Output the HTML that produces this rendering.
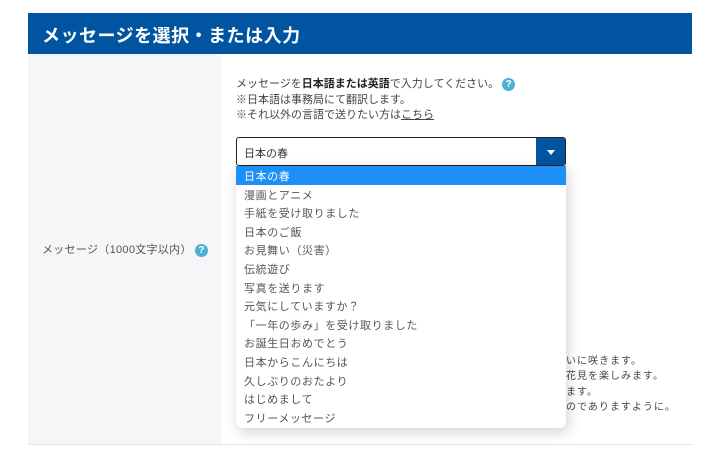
<!DOCTYPE html>
<html><head><meta charset="utf-8"><style>
*{margin:0;padding:0;box-sizing:border-box}
body{width:720px;height:458px;background:#fff;position:relative;overflow:hidden;font-family:"Liberation Sans","Noto Sans CJK JP",sans-serif;color:#444}
.hdr{position:absolute;left:28px;top:13px;width:664px;height:41px;background:#0054a0;color:#fff;font-size:18px;font-weight:bold;padding:9px 0 0 14px;letter-spacing:0.5px}
.left{position:absolute;left:28px;top:54px;width:194px;height:390px;background:#f6f5f7}
.line{position:absolute;left:28px;top:444px;width:664px;height:1px;background:#e4e4e4}
.lbl{position:absolute;left:42px;top:241px;font-size:11px;color:#555;letter-spacing:0.3px}
.q{display:inline-block;width:13px;height:13px;border-radius:50%;background:#4cb0d6;color:#fff;font-size:10px;font-weight:bold;text-align:center;line-height:13px;vertical-align:middle}
.info{position:absolute;left:236px;top:77px;font-size:11px;line-height:15.5px;color:#444}
.info b{color:#222}
.sel{position:absolute;left:236px;top:137px;width:330px;height:29px;border:1px solid #222;border-radius:3px;background:#fff;font-size:11px;padding:7px 0 0 7px;color:#333}
.btn{position:absolute;right:0;top:0;width:29px;height:27px;background:#0054a0;border-radius:0 2px 2px 0}
.btn:after{content:"";position:absolute;left:11px;top:12px;border-left:4px solid transparent;border-right:4px solid transparent;border-top:5px solid #fff}
.dd{position:absolute;left:236px;top:166px;width:330px;height:262px;background:#fff;border-radius:0 0 6px 6px;box-shadow:2px 4px 14px rgba(0,0,0,0.18);overflow:hidden;z-index:2}
.dd div{height:18.6px;font-size:11px;padding:2px 0 0 8px;color:#555;letter-spacing:0.6px}
.dd div.a{background:#1e8ef8;color:#fff}
.bg{position:absolute;left:236px;top:354px;font-size:10px;line-height:15.3px;color:#444;letter-spacing:1px;text-align:right;width:424px}
</style></head><body>
<div class="hdr">メッセージを選択・または入力</div>
<div class="left"></div>
<div class="line"></div>
<div class="lbl">メッセージ（1000文字以内） <span class="q">?</span></div>
<div class="info">メッセージを<b>日本語または英語</b>で入力してください。 <span class="q">?</span><br>※日本語は事務局にて翻訳します。<br>※それ以外の言語で送りたい方は<u>こちら</u></div>
<div class="sel">日本の春<div class="btn"></div></div>
<div class="bg" style="text-align:left;left:566px;width:140px">いに咲きます。<br>花見を楽しみます。<br>ます。<br>のでありますように。</div>
<div class="dd">
<div class="a">日本の春</div><div>漫画とアニメ</div><div>手紙を受け取りました</div><div>日本のご飯</div><div>お見舞い（災害）</div><div>伝統遊び</div><div>写真を送ります</div><div>元気にしていますか？</div><div>「一年の歩み」を受け取りました</div><div>お誕生日おめでとう</div><div>日本からこんにちは</div><div>久しぶりのおたより</div><div>はじめまして</div><div>フリーメッセージ</div>
</div>
</body></html>
